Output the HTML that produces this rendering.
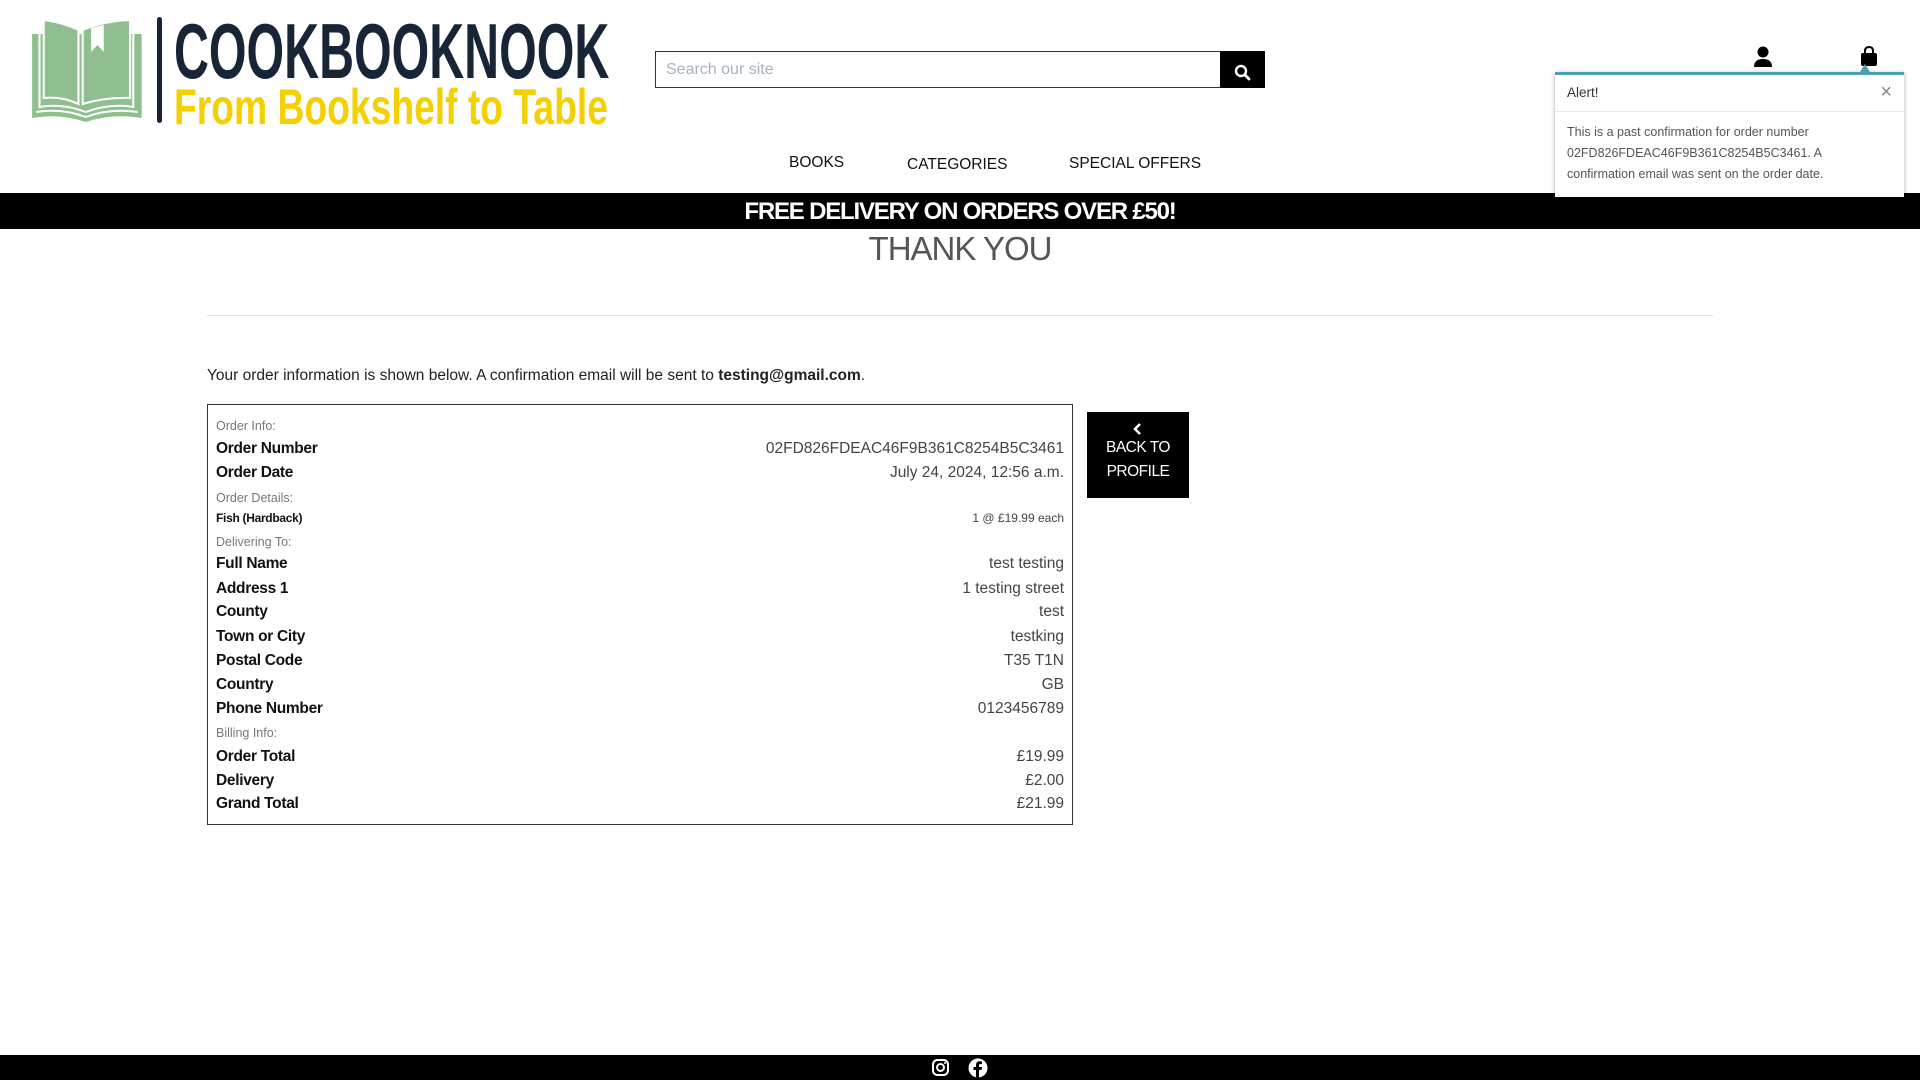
<!DOCTYPE html>
<html><head><meta charset="utf-8"><style>
*{margin:0;padding:0;box-sizing:border-box}
body{width:1920px;height:1080px;position:relative;background:#fff;font-family:"Liberation Sans",sans-serif;color:#111;overflow:hidden}
.a{position:absolute;white-space:nowrap}
.sq{transform-origin:0 0;display:inline-block}
.r{position:absolute;left:216px;width:848px;height:24px;line-height:24px}
.r b{float:left;font-size:15.5px;font-weight:bold;color:#111;letter-spacing:-0.3px}
.r span{float:right;font-size:15.5px;color:#444}
.s{position:absolute;left:216px;font-size:12.5px;color:#777;line-height:20px}
</style></head><body>
<svg class="a" style="left:30px;top:18px" width="118" height="106" viewBox="0 0 112 106" preserveAspectRatio="none">
<path d="M2 16 L2 100 Q28 95 53 104 Q78 95 106 100 L106 16 Z" fill="#8fbf8f"/>
<path d="M6 94 Q30 90 53 99 Q76 90 102 94" stroke="#fff" stroke-width="2" fill="none"/>
<path d="M9 12 L9 89 Q30 85 53 94 Q76 85 98 89 L98 12" stroke="#fff" stroke-width="2" fill="none"/>
<path d="M13 2 Q30 4 46 12 L46 86 Q30 78 13 80 Z" fill="#8fbf8f" stroke="#fff" stroke-width="2"/>
<path d="M50 12 Q70 3 95 2 L95 80 Q72 79 50 86 Z" fill="#8fbf8f" stroke="#fff" stroke-width="2"/>
<path d="M58 10 L58 34 L64 27 L70 34 L70 7 Z" fill="#fff"/>
</svg>
<div class="a" style="left:157px;top:17px;width:5px;height:106px;background:#182536;border-radius:3px"></div>
<div class="a" style="left:174px;top:6px;font-size:78px;font-weight:bold;color:#182536;line-height:90px"><span class="sq" style="transform:scaleX(0.62)">COOKBOOKNOOK</span></div>
<div class="a" style="left:174px;top:77px;font-size:50px;font-weight:bold;color:#f5d000;line-height:60px"><span class="sq" style="transform:scaleX(0.745)">From Bookshelf to Table</span></div>

<div class="a" style="left:655px;top:51px;width:565px;height:37px;border:1px solid #333;border-right:none;font-size:16px;color:#a8b2bd;padding:9px 10px">Search our site</div>
<div class="a" style="left:1220px;top:51px;width:45px;height:37px;background:#000">
<svg width="45" height="37" viewBox="0 0 45 37"><circle cx="21" cy="20" r="5" stroke="#fff" stroke-width="2.4" fill="none"/><path d="M25 24 L29 28" stroke="#fff" stroke-width="2.8" stroke-linecap="round"/></svg></div>

<div class="a" style="left:789px;top:154px;font-size:15.5px;color:#111">BOOKS</div>
<div class="a" style="left:907px;top:156px;font-size:15.5px;color:#111">CATEGORIES</div>
<div class="a" style="left:1069px;top:155px;font-size:15.5px;color:#111">SPECIAL OFFERS</div>

<svg class="a" style="left:1753px;top:46px" width="20" height="22" viewBox="0 0 20 22"><circle cx="10" cy="6" r="5.5" fill="#000"/><path d="M1 21 Q1 13 10 13 Q19 13 19 21 Z" fill="#000"/></svg>
<svg class="a" style="left:1859px;top:46px" width="20" height="22" viewBox="0 0 20 22"><path d="M6 8 V5 Q6 1 10 1 Q14 1 14 5 V8" stroke="#000" stroke-width="2" fill="none"/><rect x="2" y="7" width="16" height="13" rx="2" fill="#000"/></svg>

<div class="a" style="left:0;top:193px;width:1920px;height:36px;background:#000"></div>
<div class="a" style="left:0;top:194px;width:1920px;text-align:center;color:#fff;font-size:24px;font-weight:bold;line-height:36px;letter-spacing:-1.2px">FREE DELIVERY ON ORDERS OVER £50!</div>

<div class="a" style="left:1555px;top:72px;width:349px;height:125px;background:#fff;border-top:3px solid #4a9fb3;box-shadow:0 1px 4px rgba(0,0,0,.35)">
<div style="height:37px;border-bottom:1px solid #e8e8e8;padding:10px 12px;font-size:13.5px;color:#333">Alert!<span style="float:right;font-size:20px;color:#888;line-height:14px">×</span></div>
<div style="padding:10px 12px;font-size:12.5px;line-height:21px;color:#555;white-space:normal">This is a past confirmation for order number 02FD826FDEAC46F9B361C8254B5C3461. A confirmation email was sent on the order date.</div>
</div>
<div class="a" style="left:1860px;top:64px;width:0;height:0;border-left:5px solid transparent;border-right:5px solid transparent;border-bottom:8px solid #4a9fb3"></div>

<div class="a" style="left:0;top:229px;width:1920px;text-align:center;font-size:33px;color:#555;line-height:40px;letter-spacing:-1px">THANK YOU</div>
<div class="a" style="left:207px;top:315px;width:1506px;height:1px;background:#e3e3e3"></div>
<div class="a" style="left:207px;top:367px;font-size:15.5px;color:#222">Your order information is shown below. A confirmation email will be sent to <b>testing@gmail.com</b>.</div>

<div class="a" style="left:207px;top:404px;width:866px;height:421px;border:1px solid #333"></div>
<div class="s" style="top:416px">Order Info:</div>
<div class="r" style="top:437px"><b>Order Number</b><span>02FD826FDEAC46F9B361C8254B5C3461</span></div>
<div class="r" style="top:461px"><b>Order Date</b><span>July 24, 2024, 12:56 a.m.</span></div>
<div class="s" style="top:488px">Order Details:</div>
<div class="r" style="top:506px"><b style="font-size:12px">Fish (Hardback)</b><span style="font-size:12px">1 @ £19.99 each</span></div>
<div class="s" style="top:532px">Delivering To:</div>
<div class="r" style="top:552px"><b>Full Name</b><span>test testing</span></div>
<div class="r" style="top:577px"><b>Address 1</b><span>1 testing street</span></div>
<div class="r" style="top:600px"><b>County</b><span>test</span></div>
<div class="r" style="top:625px"><b>Town or City</b><span>testking</span></div>
<div class="r" style="top:649px"><b>Postal Code</b><span>T35 T1N</span></div>
<div class="r" style="top:673px"><b>Country</b><span>GB</span></div>
<div class="r" style="top:697px"><b>Phone Number</b><span>0123456789</span></div>
<div class="s" style="top:723px">Billing Info:</div>
<div class="r" style="top:745px"><b>Order Total</b><span>£19.99</span></div>
<div class="r" style="top:769px"><b>Delivery</b><span>£2.00</span></div>
<div class="r" style="top:792px"><b>Grand Total</b><span>£21.99</span></div>

<div class="a" style="left:1087px;top:412px;width:102px;height:86px;background:#000;color:#fff;text-align:center;font-size:15.5px;line-height:24px;padding-top:10px;letter-spacing:-0.5px">
<svg width="12" height="14" viewBox="0 0 12 14" style="display:block;margin:0 auto 0"><path d="M8 2 L3 7 L8 12" stroke="#fff" stroke-width="2.5" fill="none"/></svg>BACK TO<br>PROFILE</div>

<div class="a" style="left:0;top:1055px;width:1920px;height:25px;background:#000"></div>
<svg class="a" style="left:931px;top:1058px" width="19" height="19" viewBox="0 0 19 19"><rect x="2" y="2" width="15" height="15" rx="4.5" stroke="#fff" stroke-width="2" fill="none"/><circle cx="9.5" cy="9.5" r="3.5" stroke="#fff" stroke-width="2" fill="none"/><circle cx="14" cy="5" r="1" fill="#fff"/></svg>
<svg class="a" style="left:968px;top:1058px" width="20" height="20" viewBox="0 0 20 20"><circle cx="10" cy="10" r="9.5" fill="#fff"/><path d="M11 20 V12 H13.5 L14 9 H11 V7.5 Q11 6 12.5 6 H14 V3.5 Q12.5 3.2 11.5 3.3 Q8 3.5 8 7 V9 H5.5 V12 H8 V20 Z" fill="#000"/></svg>
</body></html>
